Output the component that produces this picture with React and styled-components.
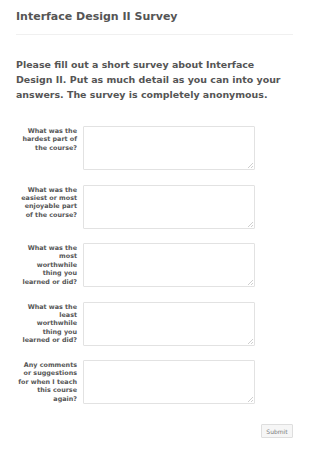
import React from "react";
import styled, { createGlobalStyle } from "styled-components";

const Global = createGlobalStyle`
  html, body { margin: 0; padding: 0; background: #fff; }
  body { font-family: "DejaVu Sans", Verdana, sans-serif; color: #555; }
`;

const Page = styled.div`
  width: 277px;
  margin-left: 16px;
  padding-top: 10px;
`;

const Title = styled.h1`
  margin: 0;
  font-size: 11px;
  line-height: 14px;
  font-weight: bold;
  color: #555;
  padding-bottom: 10px;
  border-bottom: 1px solid #f0f0f0;
`;

const Intro = styled.p`
  margin: 22px 0 0;
  font-size: 9.45px;
  line-height: 15px;
  font-weight: bold;
  color: #555;
`;

const Form = styled.form`
  display: flex;
  flex-direction: column;
  gap: 14.5px;
  margin-top: 24px;
`;

const Row = styled.div`
  display: flex;
  gap: 6px;
  align-items: flex-start;
`;

const Label = styled.label`
  width: 60px;
  margin-left: 1px;
  text-align: right;
  font-size: 6.4px;
  line-height: 8.4px;
  font-weight: bold;
  color: #555;
  padding-top: 1px;
`;

const Area = styled.textarea`
  box-sizing: border-box;
  width: 172px;
  height: 44px;
  margin: 0;
  border: 1px solid #e2e2e2;
  border-radius: 1px;
  background-color: #fff;
  background-image: linear-gradient(
    135deg,
    transparent 0 48%,
    #cfcfcf 48% 58%,
    transparent 58% 72%,
    #cfcfcf 72% 82%,
    transparent 82%
  );
  background-size: 5px 5px;
  background-position: right 1px bottom 1px;
  background-repeat: no-repeat;
  resize: none;
  outline: none;
  font-family: inherit;
  font-size: 7px;
`;

const Actions = styled.div`
  display: flex;
  justify-content: flex-end;
  margin-top: 5.5px;
`;

const Submit = styled.button`
  box-sizing: border-box;
  width: 32px;
  height: 14px;
  padding: 0;
  border: 1px solid #dedede;
  border-radius: 1px;
  background: #f6f6f6;
  color: #7a7a7a;
  font-family: "DejaVu Sans", Verdana, sans-serif;
  font-size: 6px;
`;

const questions = [
  "What was the hardest part of the course?",
  "What was the easiest or most enjoyable part of the course?",
  "What was the most worthwhile thing you learned or did?",
  "What was the least worthwhile thing you learned or did?",
  "Any comments or suggestions for when I teach this course again?",
];

export default function App() {
  return (
    <>
      <Global />
      <Page>
        <Title>Interface Design II Survey</Title>
        <Intro>
          Please fill out a short survey about Interface Design II. Put as much
          detail as you can into your answers. The survey is completely
          anonymous.
        </Intro>
        <Form onSubmit={(e) => e.preventDefault()}>
          {questions.map((q, i) => (
            <Row key={i}>
              <Label htmlFor={`q${i}`}>{q}</Label>
              <Area id={`q${i}`} />
            </Row>
          ))}
          <Actions>
            <Submit type="submit">Submit</Submit>
          </Actions>
        </Form>
      </Page>
    </>
  );
}
